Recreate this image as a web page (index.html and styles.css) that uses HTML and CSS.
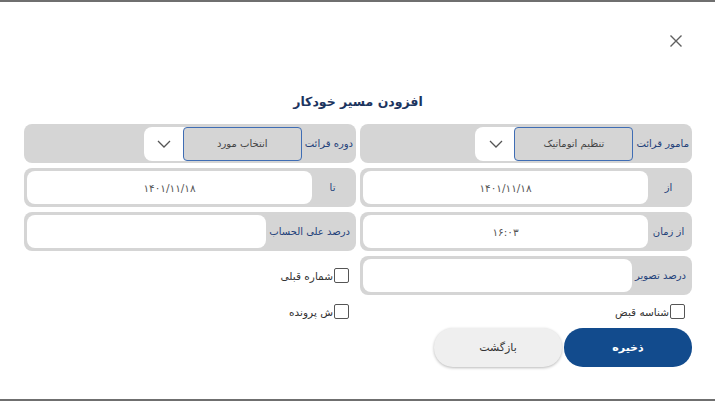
FILE: index.html
```html
<!DOCTYPE html>
<html lang="fa" dir="rtl">
<head>
<meta charset="utf-8">
<title>افزودن مسیر خودکار</title>
<link rel="stylesheet" href="styles.css">
</head>
<body>
<div class="page">
  <div class="top">
    <button class="close" aria-label="بستن">
      <svg width="14" height="14" viewBox="0 0 14 14"><path d="M1.5 1.5 L12.5 12.5 M12.5 1.5 L1.5 12.5" stroke="#5f5f5f" stroke-width="1.4" fill="none"/></svg>
    </button>
  </div>
  <h1 class="title">افزودن مسیر خودکار</h1>
  <div class="form">
    <div class="field">
      <span class="label label-fixed">مامور قرائت</span>
      <div class="select">
        <div class="select-value">تنظیم اتوماتیک</div>
        <div class="select-arrow"><svg width="14" height="8" viewBox="0 0 14 8"><path d="M1 1 L7 7 L13 1" stroke="#555" stroke-width="1.3" fill="none"/></svg></div>
      </div>
    </div>
    <div class="field">
      <span class="label label-fixed">دوره قرائت</span>
      <div class="select">
        <div class="select-value">انتخاب مورد</div>
        <div class="select-arrow"><svg width="14" height="8" viewBox="0 0 14 8"><path d="M1 1 L7 7 L13 1" stroke="#555" stroke-width="1.3" fill="none"/></svg></div>
      </div>
    </div>
    <div class="field">
      <span class="label">از</span>
      <div class="input">۱۴۰۱/۱۱/۱۸</div>
    </div>
    <div class="field">
      <span class="label">تا</span>
      <div class="input">۱۴۰۱/۱۱/۱۸</div>
    </div>
    <div class="field">
      <span class="label">از زمان</span>
      <div class="input">۱۶:۰۳</div>
    </div>
    <div class="field">
      <span class="label">درصد علی الحساب</span>
      <div class="input"></div>
    </div>
    <div class="field">
      <span class="label">درصد تصویر</span>
      <div class="input"></div>
    </div>
    <label class="check"><span class="box"></span>شماره قبلی</label>
    <label class="check check-low"><span class="box"></span>شناسه قبض</label>
    <label class="check check-low"><span class="box"></span>ش پرونده</label>
  </div>
  <div class="actions">
    <button class="btn btn-primary">ذخیره</button>
    <button class="btn btn-secondary">بازگشت</button>
  </div>
</div>
</body>
</html>
```

FILE: styles.css
```css
html, body {
  margin: 0;
  padding: 0;
  background: #ffffff;
}

.page {
  box-sizing: border-box;
  height: 401px;
  border-top: 2px solid #6f6f6f;
  border-bottom: 2px solid #6f6f6f;
  padding: 0 23px 0 24px;
  direction: rtl;
  font-family: "DejaVu Sans", sans-serif;
}

.top {
  height: 46px;
  display: flex;
  align-items: flex-end;
  padding-right: 9px;
}

.close {
  border: 0;
  background: none;
  padding: 0;
  width: 14px;
  height: 14px;
  display: block;
}

.close svg {
  display: block;
}

.title {
  margin: 44px 0 0;
  font-size: 12.5px;
  line-height: 20px;
  font-weight: bold;
  color: #1c355f;
  text-align: center;
}

.form {
  margin-top: 12px;
  display: grid;
  grid-template-columns: 1fr 1fr;
  grid-template-rows: 39px 39px 39px 39px 22px;
  column-gap: 4px;
  row-gap: 5px;
}

.field {
  display: flex;
  align-items: center;
  background: #d5d5d5;
  border-radius: 8px;
  padding: 3px;
  box-sizing: border-box;
}

.label {
  flex: 1 0 auto;
  padding: 0 3px;
  text-align: center;
  font-size: 10px;
  color: #23417a;
  white-space: nowrap;
}

.label-fixed {
  flex: 0 0 auto;
  padding: 0 0 0 3px;
}

.input {
  flex: 0 1 285px;
  min-width: 0;
  height: 100%;
  background: #ffffff;
  border-radius: 8px;
  display: flex;
  align-items: center;
  justify-content: center;
  font-size: 10.5px;
  color: #555555;
}

.select {
  flex: 0 0 158px;
  height: 34px;
  display: flex;
  background: #ffffff;
  border-radius: 8px;
}

.select-value {
  flex: 0 0 119px;
  box-sizing: border-box;
  border: 1px solid #3f6db4;
  border-radius: 4px;
  background: #d5d5d5;
  display: flex;
  align-items: center;
  justify-content: center;
  font-size: 10px;
  color: #444444;
}

.select-arrow {
  flex: 1;
  display: flex;
  align-items: center;
  justify-content: center;
  padding-left: 2px;
}

.select-arrow svg {
  display: block;
}

.check {
  display: flex;
  align-items: center;
  gap: 1px;
  padding-right: 7px;
  font-size: 10.5px;
  color: #333333;
}

.check-low {
  padding-top: 1px;
}

.box {
  width: 15px;
  height: 15px;
  box-sizing: border-box;
  border: 1.5px solid #555555;
  border-radius: 2px;
  background: #ffffff;
}

.actions {
  margin-top: 6px;
  display: flex;
  gap: 2px;
}

.btn {
  width: 128px;
  height: 39px;
  border: 0;
  border-radius: 19px;
  font-family: "DejaVu Sans", sans-serif;
  font-size: 11px;
}

.btn-primary {
  background: #124b8d;
  color: #ffffff;
  font-weight: bold;
}

.btn-secondary {
  background: #efefef;
  color: #333333;
  box-shadow: 0 1px 3px rgba(0, 0, 0, 0.28);
}
```
